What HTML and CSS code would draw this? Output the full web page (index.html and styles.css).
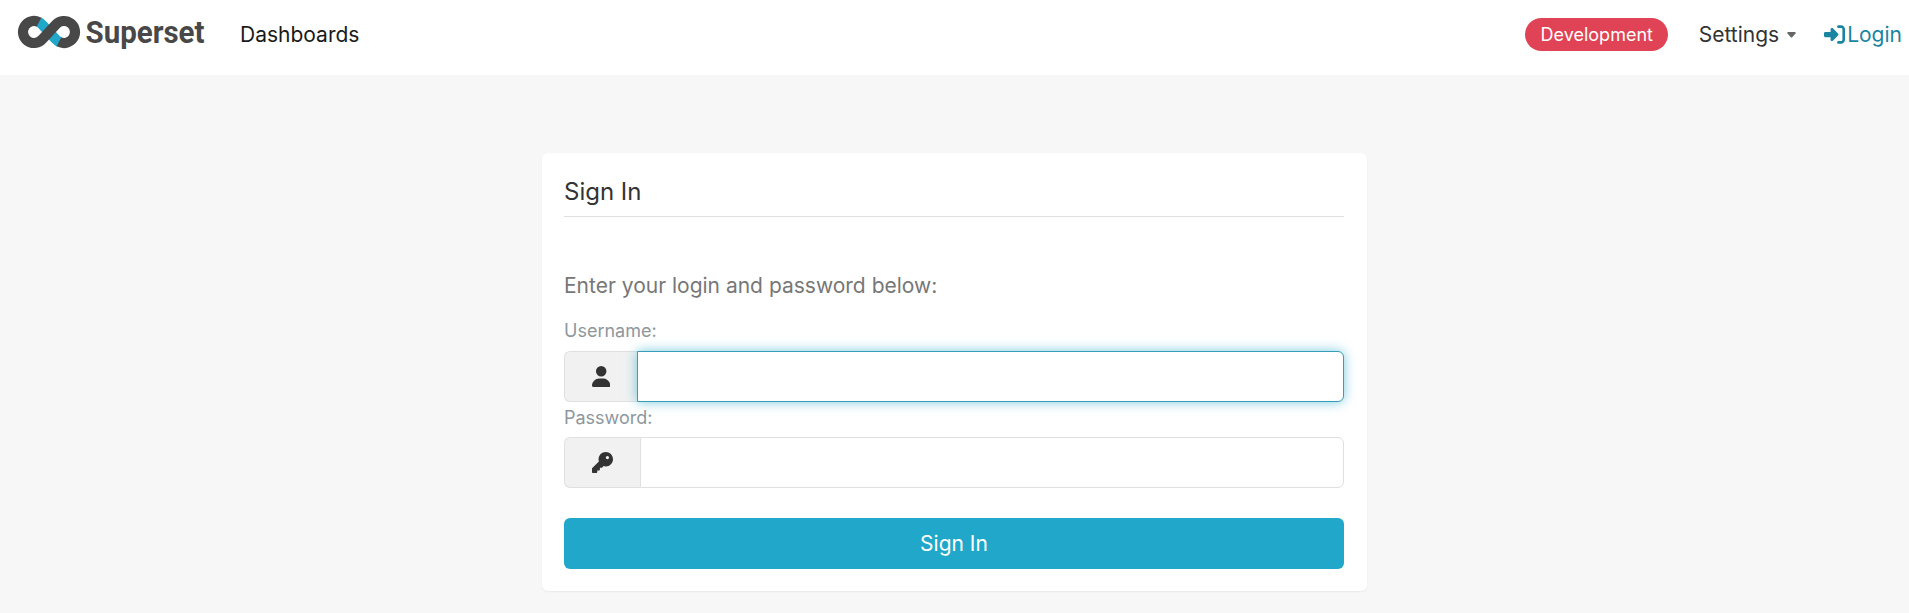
FILE: index.html
```html
<!DOCTYPE html>
<html lang="en">
<head>
<meta charset="utf-8">
<title>Superset</title>
<link rel="stylesheet" href="styles.css">
</head>
<body>
<header class="navbar">
  <a class="brand" aria-label="Superset">
    <svg class="brand-logo" width="200" height="44" viewBox="16 12 200 44">
      <g fill="none" stroke-width="10.2">
        <path stroke="#20a7c9" d="M38.6 21.9A11 11 0 0 1 42.07 24.52L55.93 39.48A11 11 0 0 0 59.4 42.1"/>
        <path stroke="#484848" d="M39 22.2A11 11 0 1 0 42.07 39.48L55.93 24.52A11 11 0 1 1 59 41.8"/>
      </g>
      <text class="brand-name" x="85.5" y="42.8" textLength="119" lengthAdjust="spacingAndGlyphs">Superset</text>
    </svg>
  </a>
  <a class="nav-link nav-main">Dashboards</a>
  <nav class="nav-right">
    <span class="env-tag">Development</span>
    <a class="nav-link settings">Settings
      <svg class="caret" width="9" height="6" viewBox="0 0 9 6"><path d="M1.2 0h6.600c1 0 1.200.9.700 1.500L5.200 5.200a1 1 0 0 1-1.400 0L.5 1.500C0 .9.200 0 1.200 0z" fill="#666"/></svg>
    </a>
    <a class="nav-link login"><svg width="21" height="21" viewBox="0 0 512 512" fill="currentColor"><path d="M217.9 105.9L340.7 228.7c7.2 7.2 11.3 17.1 11.3 27.3s-4.1 20.1-11.3 27.3L217.9 406.1c-6.4 6.4-15 9.9-24 9.9c-18.7 0-33.9-15.2-33.9-33.9l0-62.1L32 320c-17.7 0-32-14.3-32-32l0-64c0-17.7 14.3-32 32-32l128 0 0-62.1c0-18.7 15.2-33.9 33.9-33.9c9 0 17.6 3.6 24 9.9zM352 416l64 0c17.7 0 32-14.3 32-32l0-256c0-17.7-14.3-32-32-32l-64 0c-17.7 0-32-14.3-32-32s14.3-32 32-32l64 0c53 0 96 43 96 96l0 256c0 53-43 96-96 96l-64 0c-17.7 0-32-14.3-32-32s14.3-32 32-32z"/></svg><span>Login</span></a>
  </nav>
</header>
<main class="card">
  <h1 class="card-title">Sign In</h1>
  <form class="form">
    <p class="help">Enter your login and password below:</p>
    <label class="label" for="username">Username:</label>
    <div class="input-group">
      <span class="addon"><svg width="18.4" height="21" viewBox="0 0 448 512" fill="currentColor"><path d="M224 256A128 128 0 1 0 224 0a128 128 0 1 0 0 256zm-45.7 48C79.8 304 0 383.8 0 482.3C0 498.7 13.3 512 29.7 512H418.3c16.4 0 29.7-13.3 29.7-29.7C448 383.8 368.2 304 269.7 304H178.3z"/></svg></span>
      <input class="field field-active" id="username" type="text">
    </div>
    <label class="label label-password" for="password">Password:</label>
    <div class="input-group group-password">
      <span class="addon addon-key"><svg width="21" height="21" viewBox="0 0 512 512" fill="currentColor"><path d="M336 352c97.2 0 176-78.8 176-176S433.2 0 336 0S160 78.8 160 176c0 18.7 2.9 36.8 8.3 53.7L7 391c-4.5 4.5-7 10.6-7 17v80c0 13.3 10.7 24 24 24h80c13.3 0 24-10.7 24-24V448h40c13.3 0 24-10.7 24-24V384h40c6.4 0 12.5-2.5 17-7l33.3-33.3c16.9 5.4 35 8.3 53.7 8.3zM376 96a40 40 0 1 1 0 80 40 40 0 1 1 0-80z"/></svg></span>
      <input class="field" id="password" type="password">
    </div>
    <button class="submit" type="button">Sign In</button>
  </form>
</main>
</body>
</html>
```

FILE: styles.css
```css
* { box-sizing: border-box; }

body {
  margin: 0;
  min-height: 100vh;
  overflow: hidden;
  background: #f7f7f7;
  color: #333;
  font-family: Inter, "Liberation Sans", sans-serif;
  font-size: 21px;
}

.navbar {
  display: flex;
  align-items: center;
  height: 75px;
  padding: 0 7px 6px 16px;
  background: #fff;
}

.brand-logo {
  display: block;
  overflow: visible;
}

.brand { margin-top: -1px; }

.brand-name {
  font: 700 30.5px Roboto, sans-serif;
  fill: #484848;
}

.nav-link {
  display: flex;
  align-items: center;
  line-height: 30px;
}

.nav-main {
  margin-left: 24px;
  color: #1a1a1a;
}

.nav-right {
  display: flex;
  align-items: center;
  margin-left: auto;
}

.env-tag {
  width: 143px;
  height: 33px;
  border-radius: 17px;
  background: #e04355;
  color: #fff;
  font-size: 18px;
  line-height: 33px;
  text-align: center;
}

.settings { margin-left: 30.5px; }

.caret { margin: 1px 0 0 8px; }

.login {
  gap: 2px;
  margin-left: 28px;
  color: #1a85a0;
}

.card {
  width: 825px;
  height: 438px;
  margin: 78px 0 0 542px;
  padding: 22px 23px 0 22px;
  border-radius: 6px;
  background: #fff;
  box-shadow: 0 1px 2px rgba(0, 0, 0, .06);
}

.card-title {
  height: 42px;
  margin: 0;
  border-bottom: 1px solid #e0e0e0;
  font-size: 24px;
  font-weight: 400;
  line-height: 34px;
}

.form {
  display: flex;
  flex-direction: column;
  padding-top: 54px;
}

.help {
  margin: 0;
  color: #777;
  line-height: 30px;
}

.label {
  margin-top: 17px;
  color: #8e979e;
  font-size: 18px;
  line-height: 26px;
}

.input-group {
  display: flex;
  height: 51px;
  margin-top: 7px;
}

.label-password {
  margin-top: 3px;
}

.group-password {
  margin-top: 6px;
}

.addon {
  display: flex;
  align-items: center;
  width: 73px;
  padding: 0 0 1px 27px;
  border: 1px solid #e0e0e0;
  border-right: 0;
  border-radius: 6px 0 0 6px;
  background: #f1f1f1;
}

.addon-key { width: 76px; }

.field {
  flex: 1;
  min-width: 0;
  padding: 0 18px;
  border: 1px solid #e0e0e0;
  border-radius: 0 6px 6px 0;
  outline: 0;
  background: #fff;
  font: inherit;
}

.field-active {
  border-color: #3a9db7;
  box-shadow: 0 0 12px rgba(32, 167, 201, .6);
}

.submit {
  height: 51px;
  margin-top: 30px;
  padding: 0;
  border: 0;
  border-radius: 6px;
  background: #20a7c9;
  color: #fff;
  font: inherit;
}
```
